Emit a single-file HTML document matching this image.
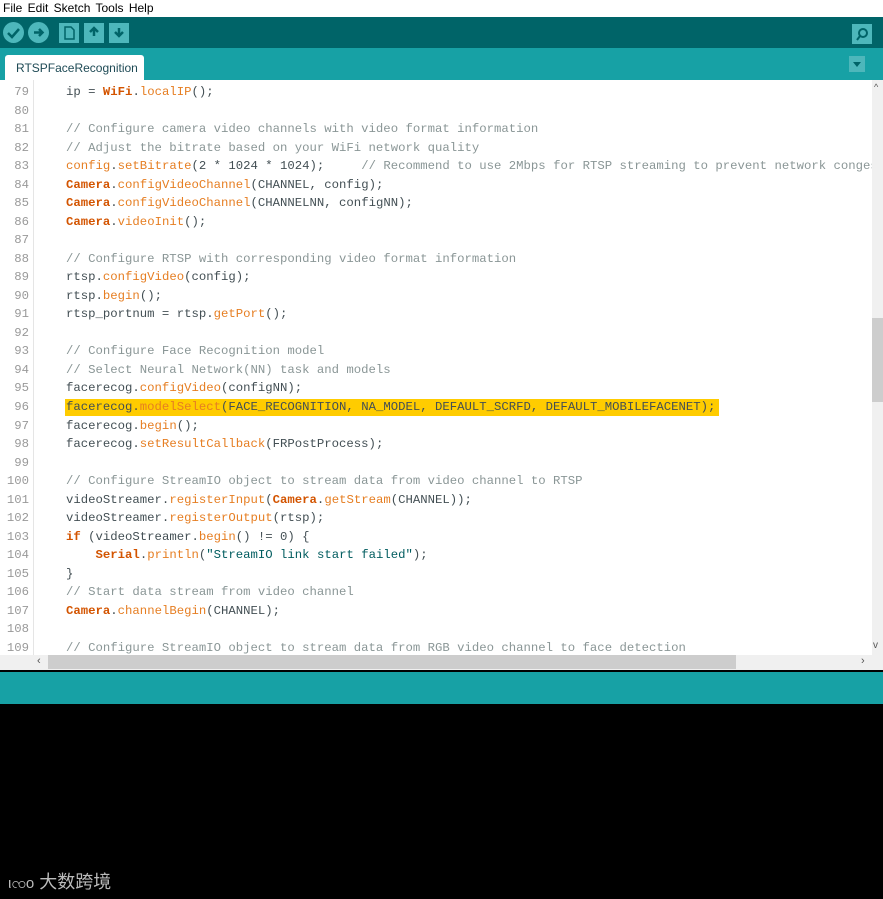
<!DOCTYPE html><html><head><meta charset="utf-8"><style>
*{margin:0;padding:0;box-sizing:border-box}
body{width:883px;height:899px;background:#000;position:relative;overflow:hidden;font-family:"Liberation Sans",sans-serif}
.menu{position:absolute;left:0;top:0;width:883px;height:17px;background:#fff;font-size:12px;color:#000;line-height:17px;padding-left:3px;word-spacing:2px}
.tb{position:absolute;left:0;top:17px;width:883px;height:31px;background:#006468}
.tabbar{position:absolute;left:0;top:48px;width:883px;height:32px;background:#17a1a5}
.tab{position:absolute;left:5px;top:7px;width:139px;height:25px;background:#fff;border-radius:3px 3px 0 0;font-size:12px;color:#1e4a55;line-height:26px;padding-left:11px}
.ed{position:absolute;left:0;top:80px;width:883px;height:575px;background:#fff;overflow:hidden}
.gut{position:absolute;left:33px;top:0;width:1px;height:575px;background:#e5e5e5}
.ln{position:absolute;left:0;width:29px;text-align:right;font:12.3px "Liberation Mono",monospace;color:#999}
.cd{position:absolute;left:66px;white-space:pre;font:12.3px "Liberation Mono",monospace;color:#434f54}
.c{color:#8a9696}.k{color:#d35400;font-weight:bold}.f{color:#e67e22}.s{color:#005c5f}
.hl{background:#ffcc00}
.vs{position:absolute;left:872px;top:80px;width:11px;height:575px;background:#f0f0f0}
.hs{position:absolute;left:0;top:655px;width:883px;height:15px;background:#f0f0f0}
.st{position:absolute;left:0;top:672px;width:883px;height:32px;background:#17a1a5}
.btn{position:absolute;top:6px;width:20px;height:20px;background:#4db7bb}
</style></head><body>
<div class="menu">File Edit Sketch Tools Help</div>
<div class="tb">
<div class="btn" style="left:3px;border-radius:50%;width:21px;height:21px;top:5px"><svg width="21" height="21"><path d="M5 11l4 4 7-8" stroke="#006468" stroke-width="2.5" fill="none"/></svg></div>
<div class="btn" style="left:28px;border-radius:50%;width:21px;height:21px;top:5px"><svg width="21" height="21"><path d="M6 10.5h8M11 7l3.5 3.5L11 14" stroke="#006468" stroke-width="2.5" fill="none"/></svg></div>
<div class="btn" style="left:59px"><svg width="20" height="20"><path d="M6 4h6l3 3v9H6z" stroke="#006468" stroke-width="1.5" fill="none"/></svg></div>
<div class="btn" style="left:84px"><svg width="20" height="20"><path d="M10 5v8M6 9l4-4 4 4" stroke="#006468" stroke-width="2.5" fill="none"/></svg></div>
<div class="btn" style="left:109px"><svg width="20" height="20"><path d="M10 5v8M6 9l4 4 4-4" stroke="#006468" stroke-width="2.5" fill="none"/></svg></div>
<div class="btn" style="left:852px;top:7px"><svg width="20" height="20"><circle cx="11" cy="9" r="4" stroke="#006468" stroke-width="2" fill="none"/><path d="M8 12l-3 4" stroke="#006468" stroke-width="2"/></svg></div>
</div>
<div class="tabbar"><div class="tab">RTSPFaceRecognition</div>
<div style="position:absolute;left:849px;top:8px;width:16px;height:16px;background:#4db7bb"><svg width="16" height="16"><path d="M4 6h8l-4 5z" fill="#006468"/></svg></div></div>
<div class="ed"><div class="gut"></div>
<div class="hl" style="position:absolute;left:65px;top:319px;width:654px;height:17px"></div>
<div id="L"></div>
</div>
<div class="vs"><div style="position:absolute;top:238px;left:0;width:11px;height:84px;background:#cdcdcd"></div><div style="position:absolute;top:2px;left:2px;font-size:9px;color:#555">^</div><div style="position:absolute;top:560px;left:1px;font-size:10px;color:#555">v</div></div>
<div class="hs"><div style="position:absolute;left:48px;top:0;width:688px;height:14px;background:#cdcdcd"></div><div style="position:absolute;left:37px;top:0;font-size:11px;color:#555">‹</div><div style="position:absolute;left:861px;top:0;font-size:11px;color:#555">›</div></div>
<div class="st"></div>
<div style="position:absolute;left:8px;top:868px;color:#bbb;font:18px 'Liberation Sans','Noto Sans CJK SC',sans-serif"><span style="font-size:15px">ιၸo</span> 大数跨境</div>
<script>
var lines=[
'ip = <span class="k">WiFi</span>.<span class="f">localIP</span>();','',
'<span class="c">// Configure camera video channels with video format information</span>',
'<span class="c">// Adjust the bitrate based on your WiFi network quality</span>',
'<span class="f">config</span>.<span class="f">setBitrate</span>(2 * 1024 * 1024);     <span class="c">// Recommend to use 2Mbps for RTSP streaming to prevent network congestion</span>',
'<span class="k">Camera</span>.<span class="f">configVideoChannel</span>(CHANNEL, config);',
'<span class="k">Camera</span>.<span class="f">configVideoChannel</span>(CHANNELNN, configNN);',
'<span class="k">Camera</span>.<span class="f">videoInit</span>();','',
'<span class="c">// Configure RTSP with corresponding video format information</span>',
'rtsp.<span class="f">configVideo</span>(config);','rtsp.<span class="f">begin</span>();','rtsp_portnum = rtsp.<span class="f">getPort</span>();','',
'<span class="c">// Configure Face Recognition model</span>',
'<span class="c">// Select Neural Network(NN) task and models</span>',
'facerecog.<span class="f">configVideo</span>(configNN);',
'facerecog.<span class="f">modelSelect</span>(FACE_RECOGNITION, NA_MODEL, DEFAULT_SCRFD, DEFAULT_MOBILEFACENET);',
'facerecog.<span class="f">begin</span>();','facerecog.<span class="f">setResultCallback</span>(FRPostProcess);','',
'<span class="c">// Configure StreamIO object to stream data from video channel to RTSP</span>',
'videoStreamer.<span class="f">registerInput</span>(<span class="k">Camera</span>.<span class="f">getStream</span>(CHANNEL));',
'videoStreamer.<span class="f">registerOutput</span>(rtsp);',
'<span class="k">if</span> (videoStreamer.<span class="f">begin</span>() != 0) {',
'    <span class="k">Serial</span>.<span class="f">println</span>(<span class="s">"StreamIO link start failed"</span>);','}',
'<span class="c">// Start data stream from video channel</span>',
'<span class="k">Camera</span>.<span class="f">channelBegin</span>(CHANNEL);','',
'<span class="c">// Configure StreamIO object to stream data from RGB video channel to face detection</span>'];
var h='';for(var i=0;i<lines.length;i++){var y=5+i*18.53;h+='<div class="ln" style="top:'+y+'px">'+(79+i)+'</div><div class="cd" style="top:'+y+'px">'+lines[i]+'</div>';}
document.getElementById('L').innerHTML=h;
</script>
</body></html>
